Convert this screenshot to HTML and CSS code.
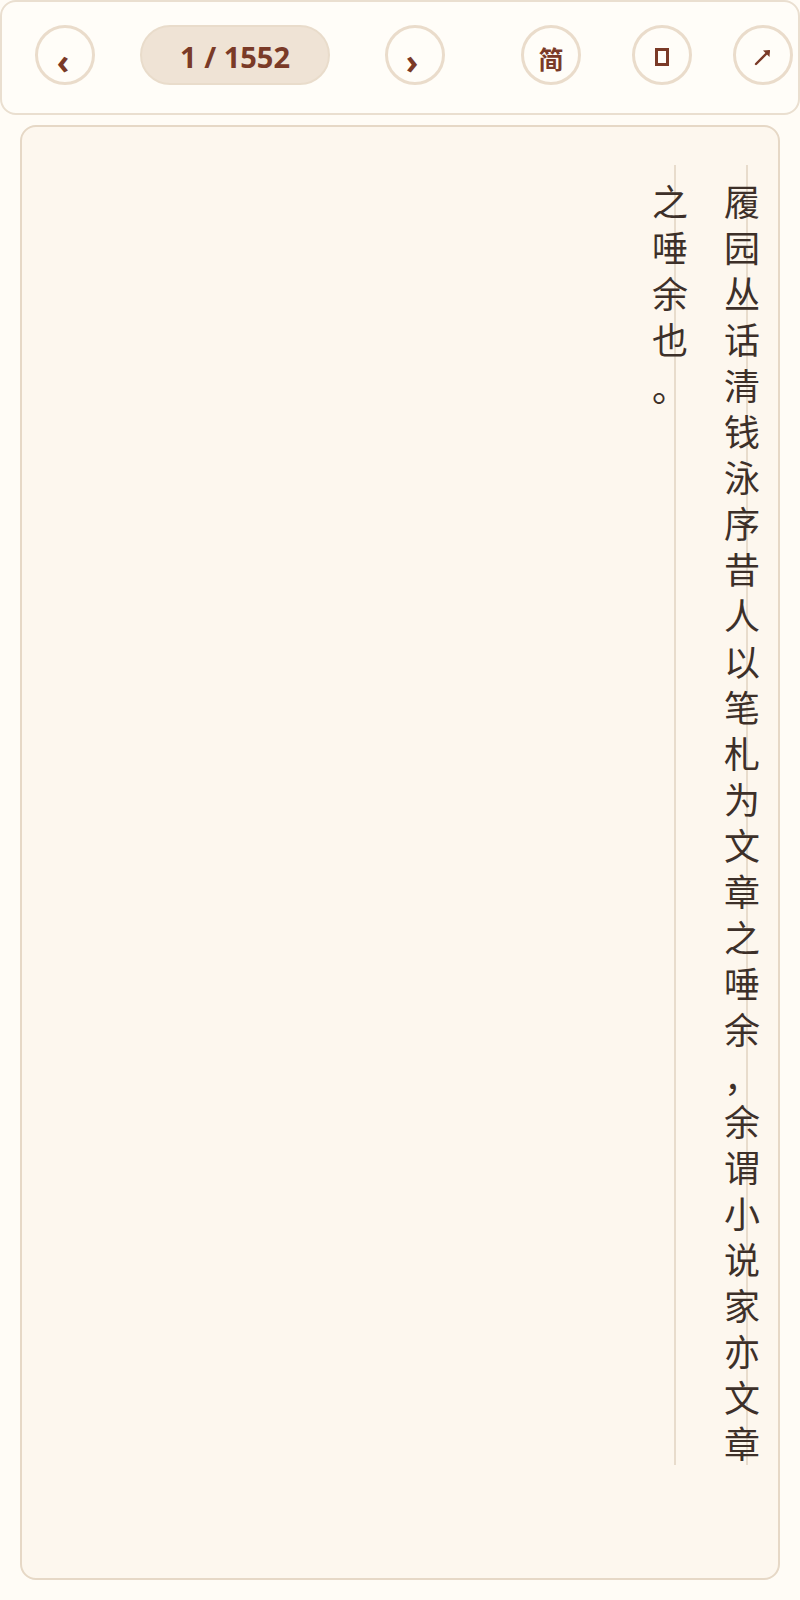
FILE: index.html
```html
<!DOCTYPE html>
<html lang="zh-CN">
<head>
<meta charset="utf-8">
<title>履园丛话</title>
<link rel="stylesheet" href="styles.css">
</head>
<body>
<div class="app">
  <header class="toolbar">
    <button class="circle prev" type="button"><span class="chev">‹</span></button>
    <div class="pager">1 / 1552</div>
    <button class="circle next" type="button"><span class="chev">›</span></button>
    <button class="circle conv" type="button"><span class="jian">简</span></button>
    <button class="circle layout" type="button"><span class="box"></span></button>
    <button class="circle expand" type="button">
      <svg class="arrow" width="18" height="18" viewBox="0 0 18 18" aria-hidden="true">
        <path d="M2 16 L14.5 3.5" stroke="#7a3a27" stroke-width="2.4" stroke-linecap="round" fill="none"/>
        <path d="M9 2.5 L16 2 L15.5 9 Z" fill="#7a3a27"/>
      </svg>
    </button>
  </header>
  <main class="stage">
    <section class="card">
      <div class="page">履园丛话清钱泳序昔人以笔札为文章之唾余<span class="p">，</span>余谓小说家亦文章<br>之唾余也<span class="p">。</span></div>
    </section>
  </main>
</div>
</body>
</html>
```

FILE: styles.css
```css
* {
  box-sizing: border-box;
}

html, body {
  margin: 0;
  padding: 0;
  background: #fffcf6;
}

body {
  font-family: "Open Sans", "Noto Sans CJK SC", sans-serif;
}

.app {
  height: 100vh;
  display: flex;
  flex-direction: column;
}

.toolbar {
  height: 115px;
  flex: none;
  display: flex;
  align-items: center;
  padding: 0 0 5px 33px;
  border: 2px solid #eadfd0;
  border-radius: 16px;
  background: #fffdf8;
}

.circle {
  width: 60px;
  height: 60px;
  flex: none;
  border: 3px solid #eadccb;
  border-radius: 50%;
  background: transparent;
  padding: 0;
  display: flex;
  align-items: center;
  justify-content: center;
  color: #7a3a27;
  font-family: "Open Sans", "Noto Sans CJK SC", sans-serif;
}

.chev {
  font-size: 34px;
  font-weight: 700;
  line-height: 1;
  margin-top: 12px;
}

.prev .chev {
  margin-right: 4px;
}

.next .chev {
  margin-right: 6px;
}

.pager {
  width: 190px;
  height: 60px;
  flex: none;
  margin-left: 45px;
  border: 2px solid #e9dccb;
  border-radius: 30px;
  background: #efe3d5;
  color: #7a3a27;
  font-size: 29px;
  font-weight: 700;
  display: flex;
  align-items: center;
  justify-content: center;
  padding-top: 3px;
}

.next {
  margin-left: 55px;
}

.conv {
  margin-left: 76px;
}

.jian {
  font-family: "Noto Sans CJK SC", sans-serif;
  font-size: 25px;
  font-weight: 700;
  line-height: 1;
  margin-top: 6px;
}

.layout {
  margin-left: 51px;
}

.box {
  width: 14px;
  height: 18px;
  border: 3px solid #7a3a27;
  margin-top: 4px;
}

.expand {
  margin-left: 41px;
}

.arrow {
  margin-top: 4px;
}

.stage {
  flex: 1;
  display: flex;
  padding: 10px 20px 20px;
}

.card {
  flex: 1;
  display: flex;
  justify-content: flex-end;
  align-items: flex-start;
  padding: 38px 0 0 0;
  border: 2px solid #e6d8c6;
  border-radius: 16px;
  background: #fdf7ee;
}

.page {
  writing-mode: vertical-rl;
  height: 1300px;
  padding-top: 19px;
  white-space: nowrap;
  font-family: "Noto Sans CJK SC", sans-serif;
  font-size: 36px;
  line-height: 72px;
  letter-spacing: 10px;
  color: #3d3029;
  background-image: repeating-linear-gradient(to left, transparent 0 30px, #e8dccc 30px 32px, transparent 32px 72px);
}

.p {
  text-combine-upright: all;
  margin-bottom: 10px;
}
```
